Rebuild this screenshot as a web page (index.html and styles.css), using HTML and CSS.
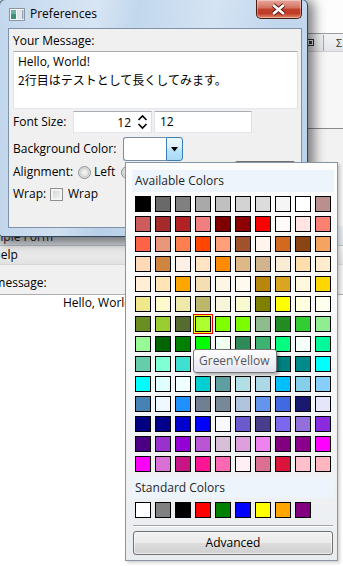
FILE: index.html
```html
<!DOCTYPE html>
<html>
<head>
<meta charset="utf-8">
<link rel="stylesheet" href="styles.css">
</head>
<body>
<div class="desktop">

  <div class="win back-a">
    <div class="ba-top"></div>
    <div class="ba-toolbar">
      <span class="ba-icon"><span class="ba-icon-in"></span></span>
      <span class="ba-sep"></span>
      <span class="ba-sigma">Σ</span>
    </div>
    <div class="ba-body"></div>
    <div class="ba-body2"></div>
  </div>

  <div class="win back-b">
    <div class="bb-title">Sample Form</div>
    <div class="bb-menu"><span class="bb-menuitem">Help</span></div>
    <div class="bb-client">
      <div class="bb-label">Your message:</div>
      <div class="bb-text">Hello, World!</div>
    </div>
  </div>

  <div class="win pref">
    <div class="titlebar">
      <svg class="appicon" width="16" height="13" viewBox="0 0 16 13">
        <rect x="0.5" y="0.5" width="15" height="12" fill="#f4f6f8" stroke="#8a96a3"/>
        <rect x="2" y="2" width="5" height="9" fill="#3f8f7a"/>
        <rect x="2" y="2" width="5" height="4" fill="#6fb09c"/>
        <rect x="8" y="2" width="6" height="9" fill="#dfe6ee"/>
        <rect x="13" y="2" width="1.5" height="9" fill="#9aa8b6"/>
      </svg>
      <span class="title">Preferences</span>
      <div class="closebtn">
        <svg width="46" height="19" viewBox="0 0 46 19">
          <path d="M17.5 5 L28.5 14 M28.5 5 L17.5 14" stroke="#5c1f17" stroke-width="4.6" fill="none"/>
          <path d="M17.5 5 L28.5 14 M28.5 5 L17.5 14" stroke="#ffffff" stroke-width="2.6" fill="none"/>
        </svg>
      </div>
    </div>
    <div class="client">
      <div class="lbl-msg">Your Message:</div>
      <div class="msgbox">Hello, World!<br><span class="jp">2行目はテストとして長くしてみます。</span></div>

      <div class="row r-font">
        <span class="lbl w-font">Font Size:</span>
        <div class="spin">
          <span class="spin-val">12</span>
          <svg class="spin-arrows" width="11" height="16" viewBox="0 0 11 16">
            <path d="M1.5 6 L5.5 2 L9.5 6" stroke="#000" stroke-width="1.6" fill="none"/>
            <path d="M1.5 10 L5.5 14 L9.5 10" stroke="#000" stroke-width="1.6" fill="none"/>
          </svg>
        </div>
        <div class="tb2">12</div>
      </div>

      <div class="row r-bg">
        <span class="lbl w-bg">Background Color:</span>
        <div class="combo">
          <div class="combo-box"></div>
          <div class="combo-btn">
            <svg width="7" height="5" viewBox="0 0 7 5"><path d="M0 0 H7 L3.5 4.5 Z" fill="#000"/></svg>
          </div>
        </div>
      </div>

      <div class="row r-align">
        <span class="lbl w-align">Alignment:</span>
        <span class="radio"></span><span class="opt">Left</span>
        <span class="radio r2"></span>
        <div class="okbtn"></div>
      </div>

      <div class="row r-wrap">
        <span class="lbl w-wrap">Wrap:</span>
        <span class="check"></span><span class="opt2">Wrap</span>
      </div>
    </div>
  </div>

  <div class="popup">
    <div class="pp-head">Available Colors</div>
    <div class="grid">
      <span class="sw" style="background:#000000"></span><span class="sw" style="background:#696969"></span><span class="sw" style="background:#808080"></span><span class="sw" style="background:#a9a9a9"></span><span class="sw" style="background:#c0c0c0"></span><span class="sw" style="background:#d3d3d3"></span><span class="sw" style="background:#dcdcdc"></span><span class="sw" style="background:#f5f5f5"></span><span class="sw" style="background:#ffffff"></span><span class="sw" style="background:#bc8f8f"></span>
      <span class="sw" style="background:#cd5c5c"></span><span class="sw" style="background:#a52a2a"></span><span class="sw" style="background:#b22222"></span><span class="sw" style="background:#f08080"></span><span class="sw" style="background:#800000"></span><span class="sw" style="background:#8b0000"></span><span class="sw" style="background:#ff0000"></span><span class="sw" style="background:#fffafa"></span><span class="sw" style="background:#ffe4e1"></span><span class="sw" style="background:#fa8072"></span>
      <span class="sw" style="background:#ff6347"></span><span class="sw" style="background:#e9967a"></span><span class="sw" style="background:#ff7f50"></span><span class="sw" style="background:#ff4500"></span><span class="sw" style="background:#ffa07a"></span><span class="sw" style="background:#a0522d"></span><span class="sw" style="background:#fff5ee"></span><span class="sw" style="background:#d2691e"></span><span class="sw" style="background:#8b4513"></span><span class="sw" style="background:#f4a460"></span>
      <span class="sw" style="background:#ffdab9"></span><span class="sw" style="background:#cd853f"></span><span class="sw" style="background:#faf0e6"></span><span class="sw" style="background:#ffe4c4"></span><span class="sw" style="background:#ff8c00"></span><span class="sw" style="background:#deb887"></span><span class="sw" style="background:#d2b48c"></span><span class="sw" style="background:#faebd7"></span><span class="sw" style="background:#ffdead"></span><span class="sw" style="background:#ffebcd"></span>
      <span class="sw" style="background:#ffefd5"></span><span class="sw" style="background:#ffe4b5"></span><span class="sw" style="background:#ffa500"></span><span class="sw" style="background:#f5deb3"></span><span class="sw" style="background:#fdf5e6"></span><span class="sw" style="background:#fffaf0"></span><span class="sw" style="background:#b8860b"></span><span class="sw" style="background:#daa520"></span><span class="sw" style="background:#fff8dc"></span><span class="sw" style="background:#ffd700"></span>
      <span class="sw" style="background:#f0e68c"></span><span class="sw" style="background:#fffacd"></span><span class="sw" style="background:#eee8aa"></span><span class="sw" style="background:#bdb76b"></span><span class="sw" style="background:#f5f5dc"></span><span class="sw" style="background:#fafad2"></span><span class="sw" style="background:#808000"></span><span class="sw" style="background:#ffff00"></span><span class="sw" style="background:#ffffe0"></span><span class="sw" style="background:#fffff0"></span>
      <span class="sw" style="background:#6b8e23"></span><span class="sw" style="background:#9acd32"></span><span class="sw" style="background:#556b2f"></span><span class="sw sel" style="background:#adff2f"></span><span class="sw" style="background:#7fff00"></span><span class="sw" style="background:#7cfc00"></span><span class="sw" style="background:#8fbc8f"></span><span class="sw" style="background:#228b22"></span><span class="sw" style="background:#32cd32"></span><span class="sw" style="background:#90ee90"></span>
      <span class="sw" style="background:#98fb98"></span><span class="sw" style="background:#006400"></span><span class="sw" style="background:#008000"></span><span class="sw" style="background:#00ff00"></span><span class="sw" style="background:#f0fff0"></span><span class="sw" style="background:#2e8b57"></span><span class="sw" style="background:#3cb371"></span><span class="sw" style="background:#00ff7f"></span><span class="sw" style="background:#f5fffa"></span><span class="sw" style="background:#00fa9a"></span>
      <span class="sw" style="background:#66cdaa"></span><span class="sw" style="background:#7fffd4"></span><span class="sw" style="background:#40e0d0"></span><span class="sw" style="background:#20b2aa"></span><span class="sw" style="background:#48d1cc"></span><span class="sw" style="background:#2f4f4f"></span><span class="sw" style="background:#afeeee"></span><span class="sw" style="background:#008080"></span><span class="sw" style="background:#008b8b"></span><span class="sw" style="background:#00ffff"></span>
      <span class="sw" style="background:#00ffff"></span><span class="sw" style="background:#e0ffff"></span><span class="sw" style="background:#f0ffff"></span><span class="sw" style="background:#00ced1"></span><span class="sw" style="background:#5f9ea0"></span><span class="sw" style="background:#b0e0e6"></span><span class="sw" style="background:#add8e6"></span><span class="sw" style="background:#00bfff"></span><span class="sw" style="background:#87ceeb"></span><span class="sw" style="background:#87cefa"></span>
      <span class="sw" style="background:#4682b4"></span><span class="sw" style="background:#f0f8ff"></span><span class="sw" style="background:#1e90ff"></span><span class="sw" style="background:#708090"></span><span class="sw" style="background:#778899"></span><span class="sw" style="background:#b0c4de"></span><span class="sw" style="background:#6495ed"></span><span class="sw" style="background:#4169e1"></span><span class="sw" style="background:#191970"></span><span class="sw" style="background:#e6e6fa"></span>
      <span class="sw" style="background:#000080"></span><span class="sw" style="background:#00008b"></span><span class="sw" style="background:#0000cd"></span><span class="sw" style="background:#0000ff"></span><span class="sw" style="background:#f8f8ff"></span><span class="sw" style="background:#6a5acd"></span><span class="sw" style="background:#483d8b"></span><span class="sw" style="background:#7b68ee"></span><span class="sw" style="background:#9370db"></span><span class="sw" style="background:#8a2be2"></span>
      <span class="sw" style="background:#4b0082"></span><span class="sw" style="background:#9932cc"></span><span class="sw" style="background:#9400d3"></span><span class="sw" style="background:#ba55d3"></span><span class="sw" style="background:#d8bfd8"></span><span class="sw" style="background:#dda0dd"></span><span class="sw" style="background:#ee82ee"></span><span class="sw" style="background:#800080"></span><span class="sw" style="background:#8b008b"></span><span class="sw" style="background:#ff00ff"></span>
      <span class="sw" style="background:#ff00ff"></span><span class="sw" style="background:#da70d6"></span><span class="sw" style="background:#c71585"></span><span class="sw" style="background:#ff1493"></span><span class="sw" style="background:#ff69b4"></span><span class="sw" style="background:#fff0f5"></span><span class="sw" style="background:#db7093"></span><span class="sw" style="background:#dc143c"></span><span class="sw" style="background:#ffc0cb"></span><span class="sw" style="background:#ffb6c1"></span>
    </div>
    <div class="pp-head pp-head2">Standard Colors</div>
    <div class="stdrow">
      <span class="sw" style="background:#ffffff"></span><span class="sw" style="background:#808080"></span><span class="sw" style="background:#000000"></span><span class="sw" style="background:#ff0000"></span><span class="sw" style="background:#008000"></span><span class="sw" style="background:#0000ff"></span><span class="sw" style="background:#ffff00"></span><span class="sw" style="background:#ffa500"></span><span class="sw" style="background:#800080"></span>
    </div>
    <div class="pp-sep"></div>
    <div class="advbtn">Advanced</div>
  </div>

  <div class="tooltip">GreenYellow</div>
</div>
</body>
</html>
```

FILE: styles.css
```css
* { box-sizing: border-box; }
html, body { margin: 0; padding: 0; }
body {
  width: 343px;
  height: 566px;
  overflow: hidden;
  font-family: "Open Sans", "Noto Sans CJK JP", sans-serif;
  font-size: 12px;
  color: #000;
  background: #fff;
}
.desktop {
  position: relative;
  width: 343px;
  height: 566px;
  overflow: hidden;
  background: #f4f4f4;
}
.win { position: absolute; }

/* ---------- back window A (top right) ---------- */
.back-a {
  left: 296px;
  top: -10px;
  width: 80px;
  height: 236px;
  background: #fcfcfc;
  display: flex;
  flex-direction: column;
}
.ba-top { height: 43px; background: #fdfdfd; }
.ba-toolbar {
  height: 18px;
  border-top: 1px solid #9c9c9c;
  background: linear-gradient(#f3f4f6, #e4e6e9);
  display: flex;
  align-items: center;
  padding-left: 11px;
}
.ba-icon {
  width: 7px; height: 7px;
  border: 1px solid #333;
  display: flex; align-items: center; justify-content: center;
}
.ba-icon-in { width: 3px; height: 3px; background: #333; }
.ba-sep { width: 1px; height: 16px; background: #a9a9a9; margin-left: 9px; }
.ba-sigma { margin-left: 12px; font-size: 11px; color: #333; }
.ba-body { height: 78px; background: #f7f7f7; border-bottom: 1px solid #8a8a8a; border-top: 1px solid #cfcfcf; }
.ba-body2 { flex: 1; background: #f2f2f2; }

/* ---------- back window B (bottom left) ---------- */
.back-b {
  left: -60px;
  top: 226px;
  width: 440px;
  height: 360px;
  background: #fff;
  display: flex;
  flex-direction: column;
}
.bb-title {
  height: 27px;
  background: linear-gradient(#e6eaee, #dde2e7);
  padding: 3px 0 0 39px;
  line-height: 16px;
  color: #1e1e1e;
}
.bb-menu {
  height: 20px;
  border-top: 1px solid #b9c1c9;
  border-bottom: 1px solid #d6d6d6;
  background: linear-gradient(#f2f2f2, #e2e2e2);
  padding-left: 52px;
  line-height: 18px;
}
.bb-client { flex: 1; background: #f0f0f0; padding-top: 10px; }
.bb-label { padding-left: 25px; line-height: 16px; height: 16px; }
.bb-text {
  margin-top: 3px;
  height: 300px;
  background: #fff;
  border-top: 1px solid #abadb3;
  padding: 0 0 0 123px;
  line-height: 16px;
}

/* ---------- Preferences window ---------- */
.pref {
  left: -1px;
  top: -1px;
  width: 309px;
  height: 238px;
  border: 1px solid #33475c;
  border-radius: 6px 6px 3px 3px;
  padding: 0 5px 7px 8px;
  background:
    linear-gradient(100deg, rgba(255,255,255,0) 0%, rgba(255,255,255,.35) 28%, rgba(255,255,255,0) 40%, rgba(255,255,255,.3) 62%, rgba(255,255,255,0) 80%),
    linear-gradient(#c3d8ee, #b7cfe8);
  box-shadow: 3px 3px 12px 3px rgba(0,0,0,.5);
  display: flex;
  flex-direction: column;
}
.titlebar {
  height: 28px;
  flex: none;
  display: flex;
  align-items: center;
}
.appicon { margin-left: 1px; margin-top: 1px; flex: none; }
.title { margin-left: 5px; line-height: 16px; color: #000; }
.closebtn {
  margin-left: auto;
  align-self: flex-start;
  width: 46px;
  height: 19px;
  border: 1px solid #4b1a12;
  border-top: none;
  border-radius: 0 0 5px 5px;
  background:
    linear-gradient(#e8a89c 0%, #d2715f 45%, #c0402b 50%, #c23c28 75%, #e08a6a 100%);
  box-shadow: inset 0 0 0 1px rgba(255,255,255,.35);
  display: flex;
}
.closebtn svg { margin-left: -1px; }

.client {
  height: 200px;
  flex: none;
  border: 1px solid #7f93a8;
  background: #f0f0f0;
  padding: 3px 3px 0 4px;
}
.lbl-msg { height: 16px; line-height: 16px; margin-top: 1px; }
.msgbox {
  margin-top: 2px;
  height: 58px;
  background: #fff;
  border: 1px solid;
  border-color: #abadb3 #dbdfe6 #e3e9ef #e2e3ea;
  padding: 1px 4px 0;
  line-height: 18px;
}
.jp { font-family: "Noto Sans CJK JP", sans-serif; font-size: 12px; }
.row { display: flex; align-items: center; }
.lbl { flex: none; line-height: 16px; }
.w-font { width: 60px; }
.w-bg { width: 110px; }
.w-align { width: 65px; }
.w-wrap { width: 37px; }

.r-font { margin-top: 2px; height: 22px; }
.spin {
  width: 79px;
  height: 22px;
  background: #fff;
  border: 1px solid;
  border-color: #abadb3 #dbdfe6 #e3e9ef #e2e3ea;
  display: flex;
  align-items: center;
}
.spin-val { flex: 1; text-align: right; padding-right: 6px; }
.spin-arrows { flex: none; margin-right: 3px; }
.tb2 {
  margin-left: 2px;
  width: 98px;
  height: 22px;
  background: #fff;
  border: 1px solid;
  border-color: #abadb3 #dbdfe6 #e3e9ef #e2e3ea;
  padding-left: 5px;
  line-height: 20px;
}

.r-bg { margin-top: 4px; height: 24px; }
.combo { display: flex; height: 24px; width: 60px; }
.combo-box {
  width: 43px;
  height: 24px;
  background: #fff;
  border: 1px solid #7a8da3;
  border-right: none;
  border-radius: 3px 0 0 3px;
}
.combo-btn {
  width: 17px;
  height: 24px;
  border: 1px solid #3c7fb1;
  border-radius: 0 3px 3px 0;
  background: linear-gradient(#eaf6fd 0%, #d9f0fc 45%, #bee6fd 50%, #a7d9f5 100%);
  display: flex;
  align-items: center;
  justify-content: center;
}

.r-align { height: 22px; align-items: center; }
.radio {
  width: 13px;
  height: 13px;
  flex: none;
  border-radius: 50%;
  border: 1px solid #8e8f8f;
  background: radial-gradient(circle, #f7f7f7 0, #e4e4e4 3px, #cfcfcf 4.5px, #f2f2f2 6px);
}
.opt { margin-left: 3px; line-height: 16px; }
.r2 { margin-left: 6px; }
.okbtn {
  align-self: flex-start;
  margin-left: auto;
  margin-right: 2px;
  width: 62px;
  height: 22px;
  border: 1px solid #707070;
  border-radius: 3px;
  background: linear-gradient(#f2f2f2, #dddddd 50%, #cfcfcf);
}

.r-wrap { height: 22px; }
.check {
  width: 13px;
  height: 13px;
  flex: none;
  border: 1px solid #8e8f8f;
  background: linear-gradient(135deg, #cfd1d4, #f7f7f7);
  box-shadow: inset 0 0 0 2px #f4f4f4;
}
.opt2 { margin-left: 5px; line-height: 16px; }

/* ---------- Colour popup ---------- */
.popup {
  position: absolute;
  left: 125px;
  top: 162px;
  width: 213px;
  height: 399px;
  border: 1px solid #8696a6;
  background: linear-gradient(#fdfdfd, #f6f7f8 60%, #e9ecef);
  padding: 7px 3px 0 6px;
  box-shadow: 2px 2px 3px rgba(0,0,0,.18);
}
.pp-head {
  height: 22px;
  background: #edf4fc;
  line-height: 22px;
  padding-left: 3px;
  color: #262626;
}
.grid {
  margin-top: 4px;
  padding-left: 3px;
  display: grid;
  grid-template-columns: repeat(10, 16px);
  grid-auto-rows: 16px;
  gap: 4px;
}
.sw {
  display: block;
  width: 16px;
  height: 16px;
  border: 1px solid #000;
}
.sel { box-shadow: 0 0 0 1px #ffff00, 0 0 0 2px #e30000; }
.pp-head2 { margin-top: 5px; height: 21px; line-height: 21px; }
.stdrow { margin-top: 4px; padding-left: 3px; display: flex; gap: 4px; }
.pp-sep {
  margin: 7px 0 0 1px;
  width: 200px;
  height: 2px;
  border-top: 1px solid #a5a5a5;
  border-bottom: 1px solid #ffffff;
}
.advbtn {
  margin: 4px 0 0 1px;
  width: 200px;
  height: 24px;
  border: 1px solid #707070;
  border-radius: 3px;
  background: linear-gradient(#f2f2f2 0%, #ebebeb 50%, #dddddd 50%, #cfcfcf 100%);
  box-shadow: inset 0 0 0 1px rgba(255,255,255,.6);
  text-align: center;
  line-height: 22px;
  color: #000;
}

/* ---------- Tooltip ---------- */
.tooltip {
  position: absolute;
  left: 193px;
  top: 349px;
  width: 84px;
  height: 24px;
  border: 1px solid #767676;
  border-radius: 3px;
  background: linear-gradient(#ffffff, #e4e5f0);
  color: #575757;
  padding-left: 5px;
  line-height: 22px;
  box-shadow: 2px 2px 3px rgba(0,0,0,.3);
  white-space: nowrap;
}
```
